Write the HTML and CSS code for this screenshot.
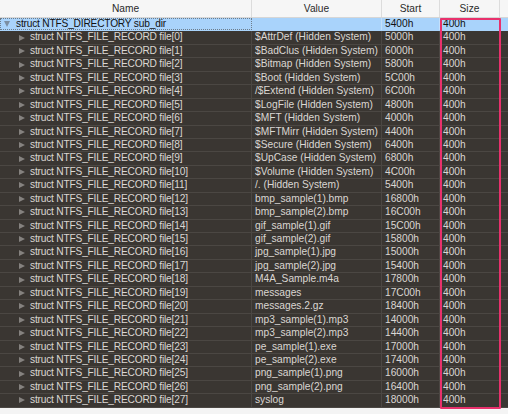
FILE: index.html
```html
<!DOCTYPE html>
<html>
<head>
<meta charset="utf-8">
<link rel="stylesheet" href="styles.css">
</head>
<body>
<div class="table">
  <div class="row head">
    <div class="cell">Name</div>
    <div class="cell">Value</div>
    <div class="cell">Start</div>
    <div class="cell">Size</div>
    <div class="cell last"></div>
  </div>
  <div class="body" id="body">
    <div class="row sel">
      <div class="cell name root"><span class="tri down"></span><span class="focus">struct NTFS_DIRECTORY sub_dir</span></div>
      <div class="cell"></div>
      <div class="cell">5400h</div>
      <div class="cell">400h</div>
      <div class="cell last"></div>
    </div>
    <div class="row"><div class="cell name"><span class="tri"></span>struct NTFS_FILE_RECORD file[0]</div><div class="cell">$AttrDef (Hidden System)</div><div class="cell">5000h</div><div class="cell">400h</div><div class="cell last"></div></div>
    <div class="row"><div class="cell name"><span class="tri"></span>struct NTFS_FILE_RECORD file[1]</div><div class="cell">$BadClus (Hidden System)</div><div class="cell">6000h</div><div class="cell">400h</div><div class="cell last"></div></div>
    <div class="row"><div class="cell name"><span class="tri"></span>struct NTFS_FILE_RECORD file[2]</div><div class="cell">$Bitmap (Hidden System)</div><div class="cell">5800h</div><div class="cell">400h</div><div class="cell last"></div></div>
    <div class="row"><div class="cell name"><span class="tri"></span>struct NTFS_FILE_RECORD file[3]</div><div class="cell">$Boot (Hidden System)</div><div class="cell">5C00h</div><div class="cell">400h</div><div class="cell last"></div></div>
    <div class="row"><div class="cell name"><span class="tri"></span>struct NTFS_FILE_RECORD file[4]</div><div class="cell">/$Extend (Hidden System)</div><div class="cell">6C00h</div><div class="cell">400h</div><div class="cell last"></div></div>
    <div class="row"><div class="cell name"><span class="tri"></span>struct NTFS_FILE_RECORD file[5]</div><div class="cell">$LogFile (Hidden System)</div><div class="cell">4800h</div><div class="cell">400h</div><div class="cell last"></div></div>
    <div class="row"><div class="cell name"><span class="tri"></span>struct NTFS_FILE_RECORD file[6]</div><div class="cell">$MFT (Hidden System)</div><div class="cell">4000h</div><div class="cell">400h</div><div class="cell last"></div></div>
    <div class="row"><div class="cell name"><span class="tri"></span>struct NTFS_FILE_RECORD file[7]</div><div class="cell">$MFTMirr (Hidden System)</div><div class="cell">4400h</div><div class="cell">400h</div><div class="cell last"></div></div>
    <div class="row"><div class="cell name"><span class="tri"></span>struct NTFS_FILE_RECORD file[8]</div><div class="cell">$Secure (Hidden System)</div><div class="cell">6400h</div><div class="cell">400h</div><div class="cell last"></div></div>
    <div class="row"><div class="cell name"><span class="tri"></span>struct NTFS_FILE_RECORD file[9]</div><div class="cell">$UpCase (Hidden System)</div><div class="cell">6800h</div><div class="cell">400h</div><div class="cell last"></div></div>
    <div class="row"><div class="cell name"><span class="tri"></span>struct NTFS_FILE_RECORD file[10]</div><div class="cell">$Volume (Hidden System)</div><div class="cell">4C00h</div><div class="cell">400h</div><div class="cell last"></div></div>
    <div class="row"><div class="cell name"><span class="tri"></span>struct NTFS_FILE_RECORD file[11]</div><div class="cell">/. (Hidden System)</div><div class="cell">5400h</div><div class="cell">400h</div><div class="cell last"></div></div>
    <div class="row"><div class="cell name"><span class="tri"></span>struct NTFS_FILE_RECORD file[12]</div><div class="cell">bmp_sample(1).bmp</div><div class="cell">16800h</div><div class="cell">400h</div><div class="cell last"></div></div>
    <div class="row"><div class="cell name"><span class="tri"></span>struct NTFS_FILE_RECORD file[13]</div><div class="cell">bmp_sample(2).bmp</div><div class="cell">16C00h</div><div class="cell">400h</div><div class="cell last"></div></div>
    <div class="row"><div class="cell name"><span class="tri"></span>struct NTFS_FILE_RECORD file[14]</div><div class="cell">gif_sample(1).gif</div><div class="cell">15C00h</div><div class="cell">400h</div><div class="cell last"></div></div>
    <div class="row"><div class="cell name"><span class="tri"></span>struct NTFS_FILE_RECORD file[15]</div><div class="cell">gif_sample(2).gif</div><div class="cell">15800h</div><div class="cell">400h</div><div class="cell last"></div></div>
    <div class="row"><div class="cell name"><span class="tri"></span>struct NTFS_FILE_RECORD file[16]</div><div class="cell">jpg_sample(1).jpg</div><div class="cell">15000h</div><div class="cell">400h</div><div class="cell last"></div></div>
    <div class="row"><div class="cell name"><span class="tri"></span>struct NTFS_FILE_RECORD file[17]</div><div class="cell">jpg_sample(2).jpg</div><div class="cell">15400h</div><div class="cell">400h</div><div class="cell last"></div></div>
    <div class="row"><div class="cell name"><span class="tri"></span>struct NTFS_FILE_RECORD file[18]</div><div class="cell">M4A_Sample.m4a</div><div class="cell">17800h</div><div class="cell">400h</div><div class="cell last"></div></div>
    <div class="row"><div class="cell name"><span class="tri"></span>struct NTFS_FILE_RECORD file[19]</div><div class="cell">messages</div><div class="cell">17C00h</div><div class="cell">400h</div><div class="cell last"></div></div>
    <div class="row"><div class="cell name"><span class="tri"></span>struct NTFS_FILE_RECORD file[20]</div><div class="cell">messages.2.gz</div><div class="cell">18400h</div><div class="cell">400h</div><div class="cell last"></div></div>
    <div class="row"><div class="cell name"><span class="tri"></span>struct NTFS_FILE_RECORD file[21]</div><div class="cell">mp3_sample(1).mp3</div><div class="cell">14000h</div><div class="cell">400h</div><div class="cell last"></div></div>
    <div class="row"><div class="cell name"><span class="tri"></span>struct NTFS_FILE_RECORD file[22]</div><div class="cell">mp3_sample(2).mp3</div><div class="cell">14400h</div><div class="cell">400h</div><div class="cell last"></div></div>
    <div class="row"><div class="cell name"><span class="tri"></span>struct NTFS_FILE_RECORD file[23]</div><div class="cell">pe_sample(1).exe</div><div class="cell">17000h</div><div class="cell">400h</div><div class="cell last"></div></div>
    <div class="row"><div class="cell name"><span class="tri"></span>struct NTFS_FILE_RECORD file[24]</div><div class="cell">pe_sample(2).exe</div><div class="cell">17400h</div><div class="cell">400h</div><div class="cell last"></div></div>
    <div class="row"><div class="cell name"><span class="tri"></span>struct NTFS_FILE_RECORD file[25]</div><div class="cell">png_sample(1).png</div><div class="cell">16000h</div><div class="cell">400h</div><div class="cell last"></div></div>
    <div class="row"><div class="cell name"><span class="tri"></span>struct NTFS_FILE_RECORD file[26]</div><div class="cell">png_sample(2).png</div><div class="cell">16400h</div><div class="cell">400h</div><div class="cell last"></div></div>
    <div class="row"><div class="cell name"><span class="tri"></span>struct NTFS_FILE_RECORD file[27]</div><div class="cell">syslog</div><div class="cell">18000h</div><div class="cell">400h</div><div class="cell last"></div></div>
    <div class="highlight"></div>
  </div>
</div>
</body>
</html>
```
FILE: styles.css
```css
html, body {
  margin: 0;
  padding: 0;
  background: #f4f4f4;
}
body {
  width: 508px;
  height: 414px;
  overflow: hidden;
  font-family: "Liberation Sans", Arial, sans-serif;
  font-size: 10.2px;
}
.table {
  width: 508px;
}
.row {
  display: grid;
  grid-template-columns: 252px 130px 58px 60px 8px;
  height: 13.45px;
  box-sizing: border-box;
  border-bottom: 1px solid #4b4743;
  background: #3a3632;
  color: #dad7d3;
}
.cell {
  box-sizing: border-box;
  border-right: 1px solid #4b4743;
  padding-left: 3px;
  line-height: 12.45px;
  white-space: nowrap;
  overflow: hidden;
  display: flex;
  align-items: center;
}
.cell.last {
  border-right: none;
}
.head {
  height: 18px;
  background: #f6f6f6;
  color: #2a2a2a;
  border-bottom: 1px solid #d6d6d6;
}
.head .cell {
  justify-content: center;
  padding-left: 0;
  line-height: 17px;
  border-right: 1px solid #dcdcdc;
}
.head .cell.last {
  border-right: none;
}
.body {
  position: relative;
}
.name {
  padding-left: 19px;
  letter-spacing: -0.2px;
}
.name.root {
  padding-left: 4px;
}
.tri {
  width: 0;
  height: 0;
  border-left: 6px solid #85827f;
  border-top: 3.5px solid transparent;
  border-bottom: 3.5px solid transparent;
  margin-right: 5px;
  flex: none;
}
.tri.down {
  border-left: 3.5px solid transparent;
  border-right: 3.5px solid transparent;
  border-top: 6px solid #7b8ea2;
  border-bottom: none;
  margin-right: 6px;
}
.sel {
  background: #a9d3fb;
  color: #111;
  border-bottom: 1px solid #a9d3fb;
}
.sel .cell {
  border-right: 1px solid #c4e0fb;
}
.sel .cell.last {
  border-right: none;
}
.sel .name {
  border: 1px dotted #6d7d8c;
  padding-left: 3px;
}
.focus {
  display: block;
}
.highlight {
  position: absolute;
  left: 440px;
  top: 0px;
  width: 61px;
  height: 391px;
  box-sizing: border-box;
  border: 2px solid #e8316c;
  border-radius: 1px;
  pointer-events: none;
}
```
